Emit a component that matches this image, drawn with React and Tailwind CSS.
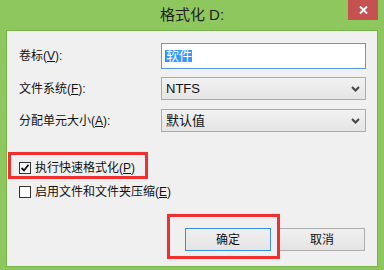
import React from 'react'

const font = { fontFamily: '"Liberation Sans", "Noto Sans CJK SC", sans-serif' }

const Chevron = () => (
    <svg width="9" height="6" viewBox="0 0 9 6" className="shrink-0">
        <path d="M1 1 L4.5 4.5 L8 1" fill="none" stroke="#444" strokeWidth="2" />
    </svg>
)

const Select = ({ value }) => (
    <div className="flex h-[23px] w-[205px] items-center justify-between border border-[#acacac] bg-gradient-to-b from-[#f2f2f2] to-[#e5e5e5] pl-[4px] pr-[5px] text-[13px] leading-none text-[#111]">
        <span>{value}</span>
        <Chevron />
    </div>
)

const Checkbox = ({ checked, label, hotkey }) => (
    <div className="flex h-[13px] items-center gap-[4px] text-[12px] leading-none text-[#111]">
        <div className="flex h-[12px] w-[12px] items-center justify-center border border-[#333] bg-white">
            {checked && (
                <svg width="10" height="10" viewBox="0 0 10 10">
                    <path d="M1.5 5 L4 7.5 L8.5 1.8" fill="none" stroke="#111" strokeWidth="1.8" />
                </svg>
            )}
        </div>
        <span>
            {label}(<span className="underline">{hotkey}</span>)
        </span>
    </div>
)

const Row = ({ label, hotkey, height, children }) => (
    <div className={`flex items-center ${height}`}>
        <div className="w-[154px] pl-[12px] text-[12px] leading-none text-[#111]">
            {label}(<span className="underline">{hotkey}</span>):
        </div>
        {children}
    </div>
)

export default function App() {
    return (
        <div style={font} className="flex h-[270px] w-[384px] flex-col bg-[#8dc75d]">
            {/* Title bar */}
            <div className="relative flex h-[30px] shrink-0 items-center justify-center pb-[1px]">
                <span className="text-[15px] leading-none text-[#1e1e1e]">格式化 D:</span>
                <div className="absolute right-[6px] top-0 flex h-[20px] w-[30px] items-center justify-center bg-[#c75050]">
                    <svg width="9" height="8" viewBox="0 0 9 8">
                        <path d="M1 0.5 L8 7.5 M8 0.5 L1 7.5" stroke="#fff" strokeWidth="2" />
                    </svg>
                </div>
            </div>

            {/* Dialog body */}
            <div className="relative ml-[6px] mr-[6px] h-[237px] border border-[#79b34b] bg-[#f0f0f0]">
                <div className="pt-[12px]">
                    <Row label="卷标" hotkey="V" height="h-[26px]">
                        <div className="flex h-[26px] w-[205px] items-center border border-[#569de5] bg-white pl-[3px]">
                            <span className="h-[12px] w-[1px] bg-[#b86a1e]" />
                            <span className="bg-[#3399ff] text-[13px] leading-[12px] text-white">软件</span>
                        </div>
                    </Row>
                    <div className="mt-[8px]">
                        <Row label="文件系统" hotkey="F" height="h-[23px]">
                            <Select value="NTFS" />
                        </Row>
                    </div>
                    <div className="mt-[9px]">
                        <Row label="分配单元大小" hotkey="A" height="h-[23px]">
                            <Select value="默认值" />
                        </Row>
                    </div>

                    <div className="mt-[29px] flex flex-col gap-[11px] pl-[12px]">
                        <Checkbox checked label="执行快速格式化" hotkey="P" />
                        <Checkbox label="启用文件和文件夹压缩" hotkey="E" />
                    </div>

                    <div className="mt-[30px] flex gap-[8px] pl-[178px]">
                        <button className="flex h-[23px] w-[86px] items-center justify-center border border-[#3c8ee0] bg-gradient-to-b from-[#f0f0f0] to-[#e4e4e4] text-[12px] leading-none text-[#111]">
                            确定
                        </button>
                        <button className="flex h-[23px] w-[86px] items-center justify-center border border-[#adadad] bg-gradient-to-b from-[#f0f0f0] to-[#e4e4e4] text-[12px] leading-none text-[#111]">
                            取消
                        </button>
                    </div>
                </div>

                {/* annotation boxes */}
                <div className="absolute left-[1px] top-[121px] h-[27px] w-[140px] border-[3px] border-[#f03030]" />
                <div className="absolute left-[160px] top-[183px] h-[45px] w-[113px] border-[3px] border-[#f03030]" />
            </div>
        </div>
    )
}
